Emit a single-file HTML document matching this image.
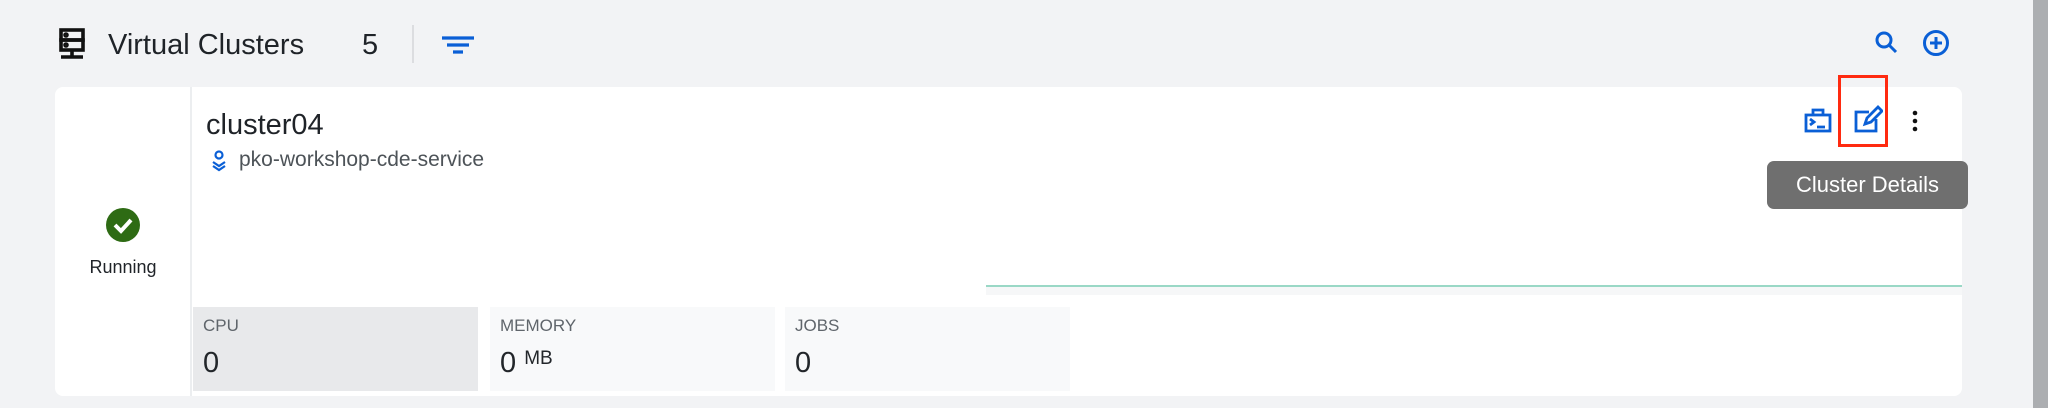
<!DOCTYPE html>
<html><head><meta charset="utf-8"><style>
body{margin:0;width:2048px;height:408px;background:#f2f3f5;position:relative;overflow:hidden;font-family:"Liberation Sans",Arial,sans-serif;color:#1f2328}
.a{position:absolute}
.card{left:55px;top:87px;width:1907px;height:309px;background:#fff;border-radius:8px}
.box{top:307px;height:84px;width:285px;background:#f8f9fa}
.lbl{font-size:17px;color:#5f656b;position:absolute;left:10px;top:9px}
.val{font-size:29px;color:#22262a;position:absolute;left:10px;top:40px}
</style></head><body>
<div class="a" style="left:2033px;top:0;width:15px;height:408px;background:#acaeb1"></div>
<svg class="a" style="left:59px;top:28px" width="26" height="32" viewBox="0 0 26 32" fill="none" stroke="#111" stroke-width="3.6"><rect x="2" y="2" width="22" height="10"/><rect x="2" y="12" width="22" height="10"/><path d="M13 22v6M2 29h22"/><circle cx="7" cy="7" r="1" fill="#111"/><circle cx="7" cy="17" r="1" fill="#111"/></svg>
<div class="a" style="left:108px;top:29px;font-size:29px">Virtual Clusters</div>
<div class="a" style="left:362px;top:29px;font-size:29px">5</div>
<div class="a" style="left:412px;top:25px;width:2px;height:38px;background:#dcdde0"></div>
<svg class="a" style="left:441px;top:36px" width="34" height="18"><path d="M1 2h32M6 9h22M12 16h10" stroke="#0a5fd6" stroke-width="3.2"/></svg>
<svg class="a" style="left:1874px;top:30px" width="26" height="26" fill="none" stroke="#0a5fd6" stroke-width="3"><circle cx="10" cy="10" r="7"/><path d="M15 15l7 7"/></svg>
<svg class="a" style="left:1922px;top:29px" width="28" height="28" fill="none" stroke="#0a5fd6" stroke-width="3"><circle cx="14" cy="14" r="11.5"/><path d="M14 8v12M8 14h12"/></svg>
<div class="a card"></div>
<div class="a" style="left:190px;top:87px;width:2px;height:309px;background:#eceef0"></div>
<svg class="a" style="left:103px;top:205px" width="40" height="40"><circle cx="20" cy="20" r="17" fill="#2e6b14"/><path d="M12 20l6 6 10-11" stroke="#fff" stroke-width="4" fill="none"/></svg>
<div class="a" style="left:63px;width:120px;text-align:center;top:257px;font-size:18px">Running</div>
<div class="a" style="left:206px;top:109px;font-size:29px">cluster04</div>
<svg class="a" style="left:210px;top:150px" width="18" height="22" fill="none" stroke="#0a5fd6" stroke-width="2.2"><circle cx="9" cy="5" r="3.5"/><path d="M3 12l6 4 6-4M3 16l6 4 6-4"/></svg>
<div class="a" style="left:239px;top:148px;font-size:21px;color:#4d5358">pko-workshop-cde-service</div>
<svg class="a" style="left:1804px;top:107px" width="28" height="26" fill="none" stroke="#0a5fd6" stroke-width="2.8"><rect x="2" y="8" width="24" height="16"/><path d="M9 8V3h10v5M6 12l4 3-4 3M13 20h8"/></svg>
<svg class="a" style="left:1853px;top:105px" width="30" height="28" fill="none" stroke="#0a5fd6" stroke-width="2.8"><path d="M16 7H3v19h20V14M12 19l2-6 11-11 4 4-11 11z"/></svg>
<svg class="a" style="left:1911px;top:110px" width="8" height="22" fill="#111"><circle cx="4" cy="3" r="2.3"/><circle cx="4" cy="11" r="2.3"/><circle cx="4" cy="19" r="2.3"/></svg>
<div class="a" style="left:1838px;top:75px;width:50px;height:72px;border:3px solid #ff2a10;box-sizing:border-box"></div>
<div class="a" style="left:1767px;top:161px;width:201px;height:48px;background:#6f6f6f;border-radius:7px;color:#fff;font-size:22px;line-height:48px;text-align:center">Cluster Details</div>
<div class="a" style="left:986px;top:285px;width:976px;height:2px;background:#9ad8c6"></div>
<div class="a" style="left:986px;top:287px;width:976px;height:8px;background:#f6f7f8"></div>
<div class="a box" style="left:193px;background:#e8e9eb"><span class="lbl">CPU</span><span class="val">0</span></div>
<div class="a box" style="left:490px"><span class="lbl">MEMORY</span><span class="val">0 <span style="font-size:19px;vertical-align:8px">MB</span></span></div>
<div class="a box" style="left:785px"><span class="lbl">JOBS</span><span class="val">0</span></div>
</body></html>
